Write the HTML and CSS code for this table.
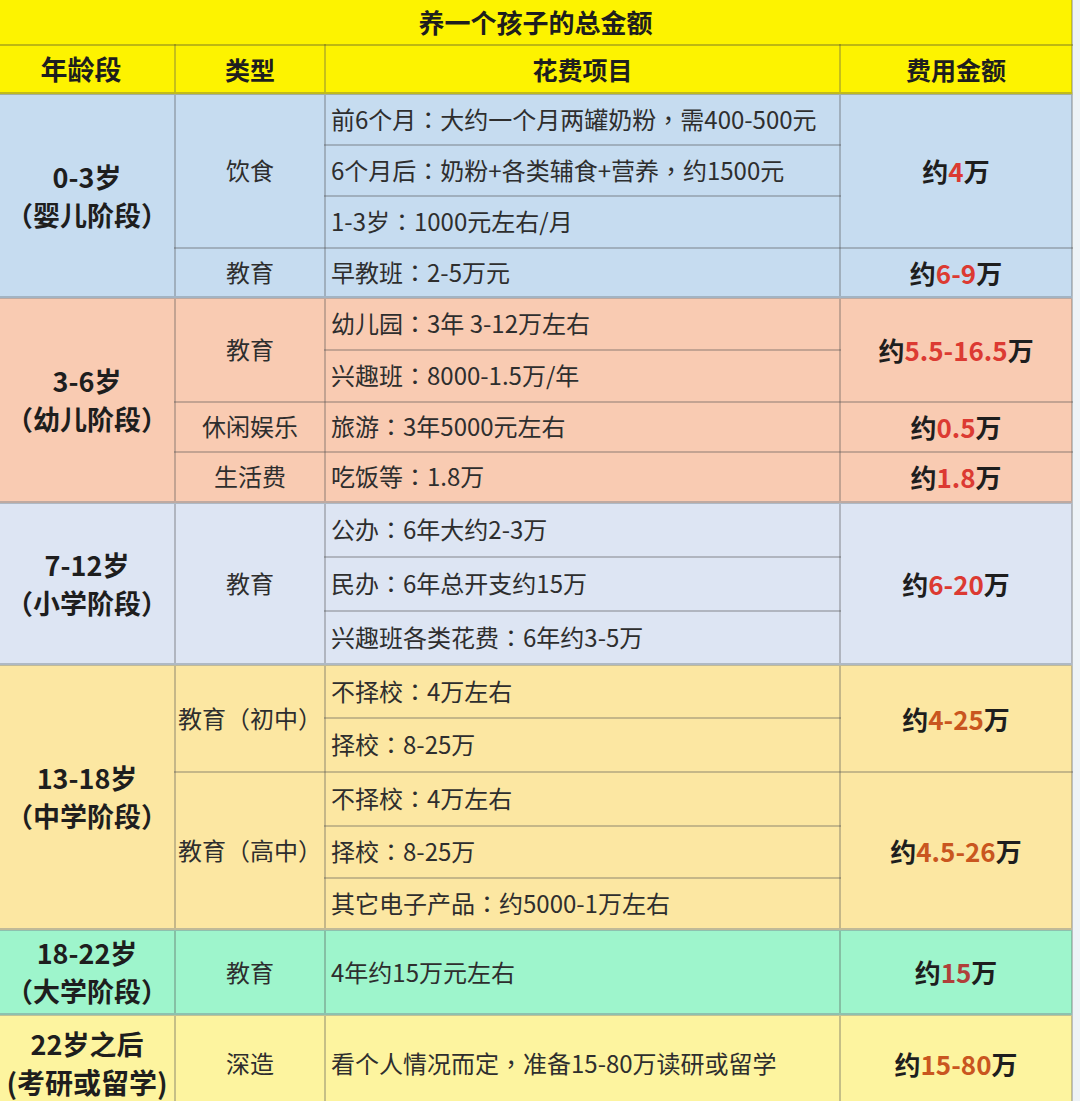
FILE: index.html
```html
<!DOCTYPE html>
<html lang="zh-CN">
<head>
<meta charset="utf-8">
<title>养一个孩子的总金额</title>
<link rel="stylesheet" href="styles.css">
</head>
<body>
<table class="cost">
  <colgroup>
    <col class="c1"><col class="c2"><col class="c3"><col class="c4">
  </colgroup>
  <tr class="title"><td colspan="4">养一个孩子的总金额</td></tr>
  <tr class="head">
    <td class="age">年龄段</td><td>类型</td><td>花费项目</td><td>费用金额</td>
  </tr>

  <tr class="s1 sec h51">
    <td class="age" rowspan="4"><div>0-3岁</div><div><span class="p" lang="zh-TW">（</span>婴儿阶段<span class="p" lang="zh-TW">）</span></div></td>
    <td class="type" rowspan="3">饮食</td>
    <td class="item">前6个月<span class="p" lang="zh-TW">：</span>大约一个月两罐奶粉<span class="p" lang="zh-TW">，</span>需400-500元</td>
    <td class="amt" rowspan="3">约<span class="r">4</span>万</td>
  </tr>
  <tr class="s1 h51"><td class="item">6个月后<span class="p" lang="zh-TW">：</span>奶粉+各类辅食+营养<span class="p" lang="zh-TW">，</span>约1500元</td></tr>
  <tr class="s1 h52"><td class="item">1-3岁<span class="p" lang="zh-TW">：</span>1000元左右/月</td></tr>
  <tr class="s1 h50">
    <td class="type">教育</td><td class="item">早教班<span class="p" lang="zh-TW">：</span>2-5万元</td>
    <td class="amt">约<span class="r">6-9</span>万</td>
  </tr>

  <tr class="s2 sec h52">
    <td class="age" rowspan="4"><div>3-6岁</div><div><span class="p" lang="zh-TW">（</span>幼儿阶段<span class="p" lang="zh-TW">）</span></div></td>
    <td class="type" rowspan="2">教育</td>
    <td class="item">幼儿园<span class="p" lang="zh-TW">：</span>3年 3-12万左右</td>
    <td class="amt" rowspan="2">约<span class="r">5.5-16.5</span>万</td>
  </tr>
  <tr class="s2 h52"><td class="item">兴趣班<span class="p" lang="zh-TW">：</span>8000-1.5万/年</td></tr>
  <tr class="s2 h50">
    <td class="type">休闲娱乐</td><td class="item">旅游<span class="p" lang="zh-TW">：</span>3年5000元左右</td>
    <td class="amt">约<span class="r">0.5</span>万</td>
  </tr>
  <tr class="s2 h51">
    <td class="type">生活费</td><td class="item">吃饭等<span class="p" lang="zh-TW">：</span>1.8万</td>
    <td class="amt">约<span class="r">1.8</span>万</td>
  </tr>

  <tr class="s3 sec h54">
    <td class="age" rowspan="3"><div>7-12岁</div><div><span class="p" lang="zh-TW">（</span>小学阶段<span class="p" lang="zh-TW">）</span></div></td>
    <td class="type" rowspan="3">教育</td>
    <td class="item">公办<span class="p" lang="zh-TW">：</span>6年大约2-3万</td>
    <td class="amt" rowspan="3">约<span class="r">6-20</span>万</td>
  </tr>
  <tr class="s3 h54"><td class="item">民办<span class="p" lang="zh-TW">：</span>6年总开支约15万</td></tr>
  <tr class="s3 h54"><td class="item">兴趣班各类花费<span class="p" lang="zh-TW">：</span>6年约3-5万</td></tr>

  <tr class="s4 sec h53">
    <td class="age" rowspan="5"><div>13-18岁</div><div><span class="p" lang="zh-TW">（</span>中学阶段<span class="p" lang="zh-TW">）</span></div></td>
    <td class="type" rowspan="2">教育<span class="p" lang="zh-TW">（</span>初中<span class="p" lang="zh-TW">）</span></td>
    <td class="item">不择校<span class="p" lang="zh-TW">：</span>4万左右</td>
    <td class="amt" rowspan="2">约<span class="o">4-25</span>万</td>
  </tr>
  <tr class="s4 h54"><td class="item">择校<span class="p" lang="zh-TW">：</span>8-25万</td></tr>
  <tr class="s4 h54">
    <td class="type" rowspan="3">教育<span class="p" lang="zh-TW">（</span>高中<span class="p" lang="zh-TW">）</span></td>
    <td class="item">不择校<span class="p" lang="zh-TW">：</span>4万左右</td>
    <td class="amt" rowspan="3">约<span class="o">4.5-26</span>万</td>
  </tr>
  <tr class="s4 h52"><td class="item">择校<span class="p" lang="zh-TW">：</span>8-25万</td></tr>
  <tr class="s4 h52"><td class="item">其它电子产品<span class="p" lang="zh-TW">：</span>约5000-1万左右</td></tr>

  <tr class="s5 sec h85">
    <td class="age"><div>18-22岁</div><div><span class="p" lang="zh-TW">（</span>大学阶段<span class="p" lang="zh-TW">）</span></div></td>
    <td class="type">教育</td>
    <td class="item">4年约15万元左右</td>
    <td class="amt">约<span class="b">15</span>万</td>
  </tr>

  <tr class="s6 sec h97">
    <td class="age"><div>22岁之后</div><div class="wide">(考研或留学)</div></td>
    <td class="type">深造</td>
    <td class="item">看个人情况而定<span class="p" lang="zh-TW">，</span>准备15-80万读研或留学</td>
    <td class="amt">约<span class="o">15-80</span>万</td>
  </tr>
</table>
</body>
</html>
```
FILE: styles.css
```css
html, body {
  margin: 0;
  padding: 0;
}
body {
  background: #eef3f7;
  font-family: "Noto Sans CJK SC", "Microsoft YaHei", sans-serif;
  color: #333;
  overflow: hidden;
}
.cost {
  border-collapse: collapse;
  table-layout: fixed;
  width: 1072px;
}
.c1 { width: 175px; }
.c2 { width: 150px; }
.c3 { width: 515px; }
.c4 { width: 232px; }

.cost td {
  border: 2px solid rgba(80, 80, 80, 0.32);
  padding: 0;
  text-align: center;
  vertical-align: middle;
  font-size: 24px;
  line-height: 1.2;
}
.cost td.age { border-left: 0; }

.title td {
  height: 44px;
  background: #fdf300;
  font-weight: 700;
  font-size: 26px;
  color: #1e1e1e;
  border-left: 0;
  border-top: 0;
  border-bottom: 2px solid rgba(110, 110, 40, 0.45);
}
.head td {
  height: 46px;
  background: #fdf300;
  font-weight: 700;
  font-size: 25px;
  color: #1e1e1e;
  border-bottom: 3px solid rgba(120, 120, 60, 0.45);
}
.head td.age { padding-right: 12px; }

.sec td { border-top: 3px solid rgba(120, 130, 140, 0.45); }

.s1 { background: #c6dcf0; }
.s2 { background: #f9cbb2; }
.s3 { background: #dde5f3; }
.s4 { background: #fce7a2; }
.s5 { background: #9ef5cc; }
.s6 { background: #fdf49f; }

.h50 { height: 50px; }
.h51 { height: 51px; }
.h52 { height: 52px; }
.h53 { height: 53px; }
.h54 { height: 54px; }
.h85 { height: 85px; }
.h97 { height: 97px; }

.cost td.age {
  font-size: 27px;
  font-weight: 700;
  line-height: 38px;
  color: #1e1e1e;
}
.cost td.age .wide { font-size: 28px; margin-left: -4px; margin-right: -4px; }

.cost td.item {
  text-align: left;
  padding-left: 5px;
  white-space: nowrap;
  color: #2e2e2e;
}
.cost td.type { white-space: nowrap; color: #2e2e2e; }

.p {
  font-family: "Noto Sans CJK TC", "Noto Sans CJK SC", sans-serif;
  font-feature-settings: "locl" 0;
}

.cost td.amt {
  font-size: 26px;
  font-weight: 700;
  color: #1e1e1e;
}
.r { color: #dc3a32; }
.o { color: #c9561f; }
.b { color: #b0403a; }
```
